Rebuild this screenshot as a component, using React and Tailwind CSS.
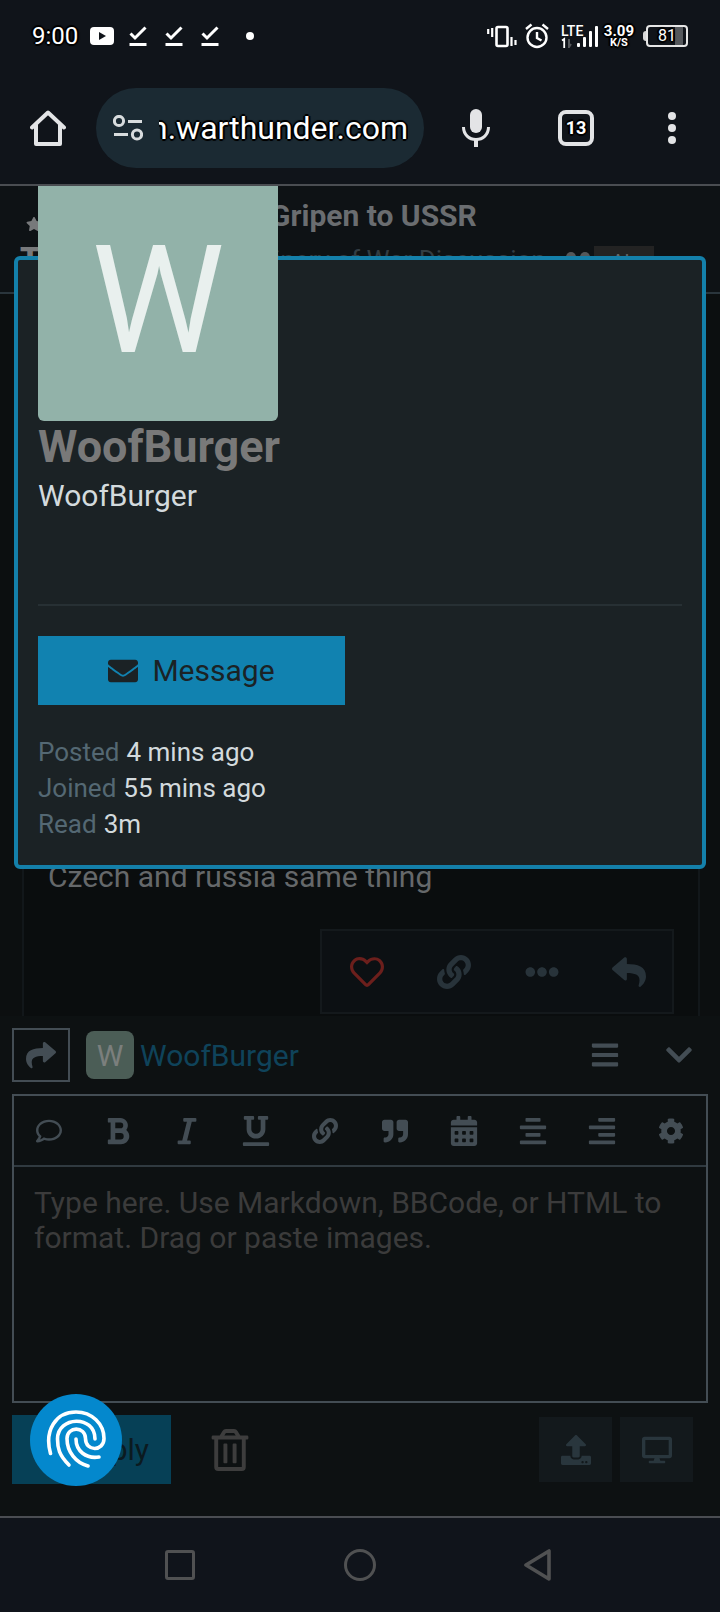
import React from "react";
import {
  FaRegHeart, FaLink, FaEllipsisH, FaReply, FaShare, FaBars, FaChevronDown, FaRegComment,
  FaBold, FaItalic, FaUnderline, FaQuoteRight, FaCalendarAlt, FaAlignCenter, FaAlignRight,
  FaCog, FaEnvelope, FaUpload, FaDesktop, FaRegTrashAlt, FaStar,
} from "react-icons/fa";

const OUTLINE = "[text-shadow:-2px_0_#000,2px_0_#000,0_-2px_#000,0_2px_#000,1px_1px_2px_#000,-1px_-1px_2px_#000]";

function DownloadDone() {
  return (
    <svg className="h-6 w-6" viewBox="0 0 24 24" fill="none" stroke="#fff" strokeWidth="3">
      <path d="M4.500 9.500 9 14 19.500 3.500" />
      <path d="M3.500 20.500h17" />
    </svg>
  );
}

function StatusBar() {
  return (
    <div className="flex h-[72px] items-center justify-between px-8 text-white">
      <div className="flex items-center">
        <span className={`text-2xl ${OUTLINE}`}>9:00</span>
        <svg className="ml-3 h-[18px] w-6" viewBox="0 0 24 18">
          <rect width="24" height="18" rx="4" fill="#fff" />
          <path d="M9 5v8l7-4z" fill="#10141a" />
        </svg>
        <div className="ml-3 flex gap-3">
          <DownloadDone />
          <DownloadDone />
          <DownloadDone />
        </div>
        <span className="ml-6 h-2 w-2 rounded-full bg-white" />
      </div>
      <div className="flex items-center">
        <svg className="h-6 w-[30px]" viewBox="0 0 30 24" fill="none" stroke="#fff" strokeWidth="2.200">
          <path d="M1.200 5v5M5.200 4v9M24.500 13v9M28.500 16v5" />
          <rect x="9.500" y="3" width="11" height="19" rx="1.500" strokeWidth="2.600" />
        </svg>
        <svg className="ml-2 h-[26px] w-6" viewBox="0 0 24 26" fill="none" stroke="#fff" strokeWidth="2.400">
          <circle cx="12" cy="14.500" r="9.500" />
          <path d="M12 9v6l4.500 2.500M1 6l5.500-4.500M23 6l-5.500-4.500" />
        </svg>
        <svg className="ml-3 h-6 w-[37px]" viewBox="0 0 37 24">
          <text x="0" y="12" fill="#fff" fontSize="14" fontWeight="500" fontFamily="Roboto, sans-serif">LTE</text>
          <path d="M1 16.500l2.200-1.500v9" fill="none" stroke="#fff" strokeWidth="1.800" />
          <path d="M8 15v8l2-3" fill="none" stroke="#55585c" strokeWidth="2" />
          <rect x="16" y="19" width="3" height="4" rx="1" fill="#fff" />
          <rect x="22" y="13" width="3" height="10" rx="1" fill="#fff" />
          <rect x="28" y="7" width="3" height="16" rx="1" fill="#fff" />
          <rect x="34" y="2" width="3" height="21" rx="1" fill="#fff" />
        </svg>
        <div className={`ml-[6px] flex flex-col items-center font-bold ${OUTLINE}`}>
          <span className="text-[15px] leading-[14px]">3.09</span>
          <span className="text-[11px] leading-[10px]">K/S</span>
        </div>
        <div className="ml-[9px] flex items-center">
          <span className="h-[10px] w-[3px] rounded-l bg-[#d8d8d8]" />
          <span className="flex h-[22px] w-[42px] items-center justify-center rounded border-2 border-[#e6e6e6] bg-[linear-gradient(to_right,transparent_70%,#55585c_70%,#55585c_93%,transparent_93%)]">
            <span className={`text-base leading-none ${OUTLINE}`}>81</span>
          </span>
        </div>
      </div>
    </div>
  );
}

function BrowserBar() {
  return (
    <div className="flex h-[114px] items-center border-b-2 border-[#4a4d52]">
      <button aria-label="Home" className="ml-[30px] shrink-0">
        <svg className="h-9 w-9" viewBox="0 0 36 36" fill="none" stroke="#e3e4e6" strokeWidth="4" strokeLinejoin="round" strokeLinecap="round">
          <path d="M2 17.500 18 2.500l16 15" />
          <path d="M6 15v19h24V15" />
        </svg>
      </button>
      <div className="ml-[30px] flex h-20 min-w-0 flex-1 items-center rounded-full bg-[#1b2a33] pl-[17px] pr-4">
        <svg className="h-[26px] w-[30px] shrink-0" viewBox="0 0 30 26" fill="none" stroke="#d8dcde" strokeWidth="3">
          <circle cx="6" cy="6" r="4.600" />
          <path d="M15 6.500h14M1 19.500h14" />
          <circle cx="24" cy="19.500" r="4.600" />
        </svg>
        <div className="ml-4 flex min-w-0 flex-1 justify-end overflow-hidden">
          <span className={`whitespace-nowrap text-[32px] leading-[44px] text-white ${OUTLINE}`}>forum.warthunder.com</span>
        </div>
      </div>
      <button aria-label="Voice search" className="ml-[38px] shrink-0">
        <svg className="h-[38px] w-7" viewBox="0 0 28 38">
          <rect x="8" width="12" height="24" rx="6" fill="#e3e4e6" />
          <path d="M1.500 18c0 7.500 5.500 12.500 12.500 12.500S26.500 25.500 26.500 18" fill="none" stroke="#e3e4e6" strokeWidth="3" />
          <path d="M14 30v8" stroke="#e3e4e6" strokeWidth="4" />
        </svg>
      </button>
      <button className={`ml-[68px] flex h-9 w-9 shrink-0 items-center justify-center rounded-lg border-4 border-[#e3e4e6] text-lg font-bold leading-none text-white ${OUTLINE}`}>
        13
      </button>
      <button aria-label="More options" className="ml-[74px] mr-11 flex shrink-0 flex-col gap-1">
        <span className="h-2 w-2 rounded-full bg-[#e3e4e6]" />
        <span className="h-2 w-2 rounded-full bg-[#e3e4e6]" />
        <span className="h-2 w-2 rounded-full bg-[#e3e4e6]" />
      </button>
    </div>
  );
}

function TopicHeader() {
  return (
    <header className="flex h-[108px] items-start border-b-2 border-[#2a353c] bg-[#0e1215] pl-5">
      <div className="flex w-[250px] shrink-0 flex-col pt-[30px] text-[#77797b]">
        <FaStar className="ml-[6px] h-4 w-4" />
        <span className="mt-3 text-[32px] font-black leading-7">T</span>
      </div>
      <div className="min-w-0 pt-3">
        <h1 className="whitespace-nowrap text-[30px] font-bold leading-9 text-[#6a6d70]">Gripen to USSR</h1>
        <div className="mt-3 flex items-start text-[#333d43]">
          <span className="ml-1 whitespace-nowrap text-[26px] leading-7">inery of War Discussion</span>
          <span className="ml-5 mt-[6px] flex gap-1">
            <span className="h-[10px] w-[10px] rounded-full bg-[#55585a]" />
            <span className="h-[10px] w-[10px] rounded-full bg-[#55585a]" />
          </span>
          <span className="ml-1 w-[60px] bg-[#232323] text-center text-xl leading-8 text-[#66696b]">Air</span>
        </div>
      </div>
    </header>
  );
}

function Stream() {
  return (
    <main className="h-[722px] bg-[#0c0f10] pl-[22px] pr-5">
      <article className="flex h-full flex-col justify-end border-x-2 border-[#12171a] bg-[#0a0d0e] px-6 pb-[2px]">
        <p className="text-[30px] leading-10 text-[#65686a]">Czech and russia same thing</p>
        <div className="mt-8 flex h-[85px] w-[354px] items-center justify-between self-end border-2 border-[#14191c] bg-[#0c1013] pl-7 pr-[26px] text-[#28333a]">
          <button aria-label="Like" className="text-[#6c1f1c]"><FaRegHeart size={34} /></button>
          <button aria-label="Copy link"><FaLink size={34} /></button>
          <button aria-label="More"><FaEllipsisH size={34} /></button>
          <button aria-label="Reply"><FaReply size={34} /></button>
        </div>
      </article>
    </main>
  );
}

function UserCard() {
  return (
    <section aria-label="User card" className="absolute inset-x-[14px] top-[70px] rounded-md border-4 border-[#1480aa] bg-[#1b2225] px-5 pb-[23px]">
      <div className="-mt-[79px] flex h-60 w-60 items-center justify-center rounded-md bg-[#92b2a9] text-[150px] leading-none text-[#e9f0ee]">
        W
      </div>
      <h2 className="text-[45px] font-bold leading-[52px] text-[#797979]">WoofBurger</h2>
      <p className="mt-[3px] text-[30px] leading-10 text-[#d3dadd]">WoofBurger</p>
      <hr className="mt-[88px] border-t-2 border-[#273034]" />
      <button className="mt-[30px] flex h-[69px] w-[307px] items-center justify-center gap-[14px] bg-[#1182b0] text-[30px] text-[#1b2225]">
        <FaEnvelope size={30} />
        Message
      </button>
      <dl className="mt-[29px] text-[26px] leading-9 text-[#d3dadd]">
        {[["Posted", "4 mins ago"], ["Joined", "55 mins ago"], ["Read", "3m"]].map(([k, v]) => (
          <div key={k} className="flex gap-[7px]">
            <dt className="text-[#546873]">{k}</dt>
            <dd>{v}</dd>
          </div>
        ))}
      </dl>
    </section>
  );
}

const TOOLS = [
  ["Chat", FaRegComment, 26], ["Bold", FaBold, 30], ["Italic", FaItalic, 30], ["Underline", FaUnderline, 30], ["Link", FaLink, 26],
  ["Quote", FaQuoteRight, 26], ["Date", FaCalendarAlt, 30], ["Center", FaAlignCenter, 30], ["Right", FaAlignRight, 30], ["Settings", FaCog, 26],
];

function Composer() {
  return (
    <section className="border-b-2 border-[#4a4d52] bg-[#0d1112] px-3 pb-8 pt-3 text-[#434d54]">
      <div className="flex h-[54px] items-center">
        <button aria-label="Reply options" className="flex h-[54px] w-[58px] items-center justify-center border-2 border-[#434d54]">
          <FaShare size={30} />
        </button>
        <span className="ml-4 flex h-12 w-12 items-center justify-center rounded-lg bg-[#4b5d56] text-[30px] text-[#7b7f7d]">W</span>
        <a href="#user" className="ml-[6px] text-[30px] text-[#0f435a]">WoofBurger</a>
        <button aria-label="Menu" className="ml-auto"><FaBars size={30} /></button>
        <button aria-label="Collapse" className="ml-11 mr-[14px]"><FaChevronDown size={30} /></button>
      </div>
      <div className="mt-3 border-2 border-[#434d54]">
        <div className="flex h-[71px] items-center justify-between border-b-2 border-[#303a40] px-5">
          {TOOLS.map(([name, Icon, size]) => (
            <button key={name} aria-label={name} className="flex w-[30px] justify-center"><Icon size={size} /></button>
          ))}
        </div>
        <textarea
          aria-label="Reply text"
          placeholder="Type here. Use Markdown, BBCode, or HTML to format. Drag or paste images."
          className="block h-[234px] w-full resize-none bg-transparent px-5 py-[18px] text-[30px] leading-[35px] outline-none placeholder:text-[#3b3b3b]"
        />
      </div>
      <div className="mt-3 flex h-[69px] items-center">
        <div className="relative">
          <button className="flex h-[69px] w-[159px] items-center justify-end bg-[#064056] pr-[22px] text-[30px] text-[#0b1a20]">Reply</button>
          <button aria-label="Fingerprint" className="absolute -top-[21px] left-[18px] flex h-[92px] w-[92px] items-center justify-center rounded-full bg-[#0488cd]">
            <svg className="h-[60px] w-[60px]" viewBox="0 0 60 60" fill="none" stroke="#fff" strokeWidth="3.600" strokeLinecap="round">
              <path d="M4.500 43.500C-2 20 10 2 30 2c16 0 28 12 28 26.500 0 13-18.500 13.500-18.500 0 0-12.500-18.500-12.500-18.500 0C21 42 30 53 42 56" />
              <path d="M23 55C13 45 11.500 38 11.500 29c0-23 37.500-24.500 37.500 0" />
              <path d="M30 29c0 12 10 20 23 18" />
            </svg>
          </button>
        </div>
        <button aria-label="Discard" className="ml-[38px] text-[#3d3d3d]"><FaRegTrashAlt size={42} /></button>
        <button aria-label="Upload" className="ml-auto flex h-[65px] w-[73px] items-center justify-center bg-[#13191c] text-[#29363d]"><FaUpload size={30} /></button>
        <button aria-label="Preview" className="ml-2 mr-[15px] flex h-[65px] w-[73px] items-center justify-center bg-[#13191c] text-[#29363d]"><FaDesktop size={30} /></button>
      </div>
    </section>
  );
}

function NavBar() {
  return (
    <nav className="flex h-[94px] items-center justify-center gap-[148px] bg-[#10141b]">
      <button aria-label="Recents">
        <svg className="h-8 w-8" viewBox="0 0 32 32" fill="none" stroke="#505152" strokeWidth="3"><rect x="2.500" y="2.500" width="27" height="27" rx="1.500" /></svg>
      </button>
      <button aria-label="Home">
        <svg className="h-8 w-8" viewBox="0 0 32 32" fill="none" stroke="#505152" strokeWidth="3"><circle cx="16" cy="16" r="14.500" /></svg>
      </button>
      <button aria-label="Back">
        <svg className="h-8 w-8" viewBox="0 0 32 32" fill="none" stroke="#505152" strokeWidth="3.600" strokeLinejoin="round"><path d="M25 2v28L2 16z" /></svg>
      </button>
    </nav>
  );
}

export default function App() {
  return (
    <div className="bg-[#10141a] font-[Roboto,sans-serif]">
      <StatusBar />
      <BrowserBar />
      <div className="relative overflow-hidden">
        <TopicHeader />
        <Stream />
        <Composer />
        <UserCard />
      </div>
      <NavBar />
    </div>
  );
}
